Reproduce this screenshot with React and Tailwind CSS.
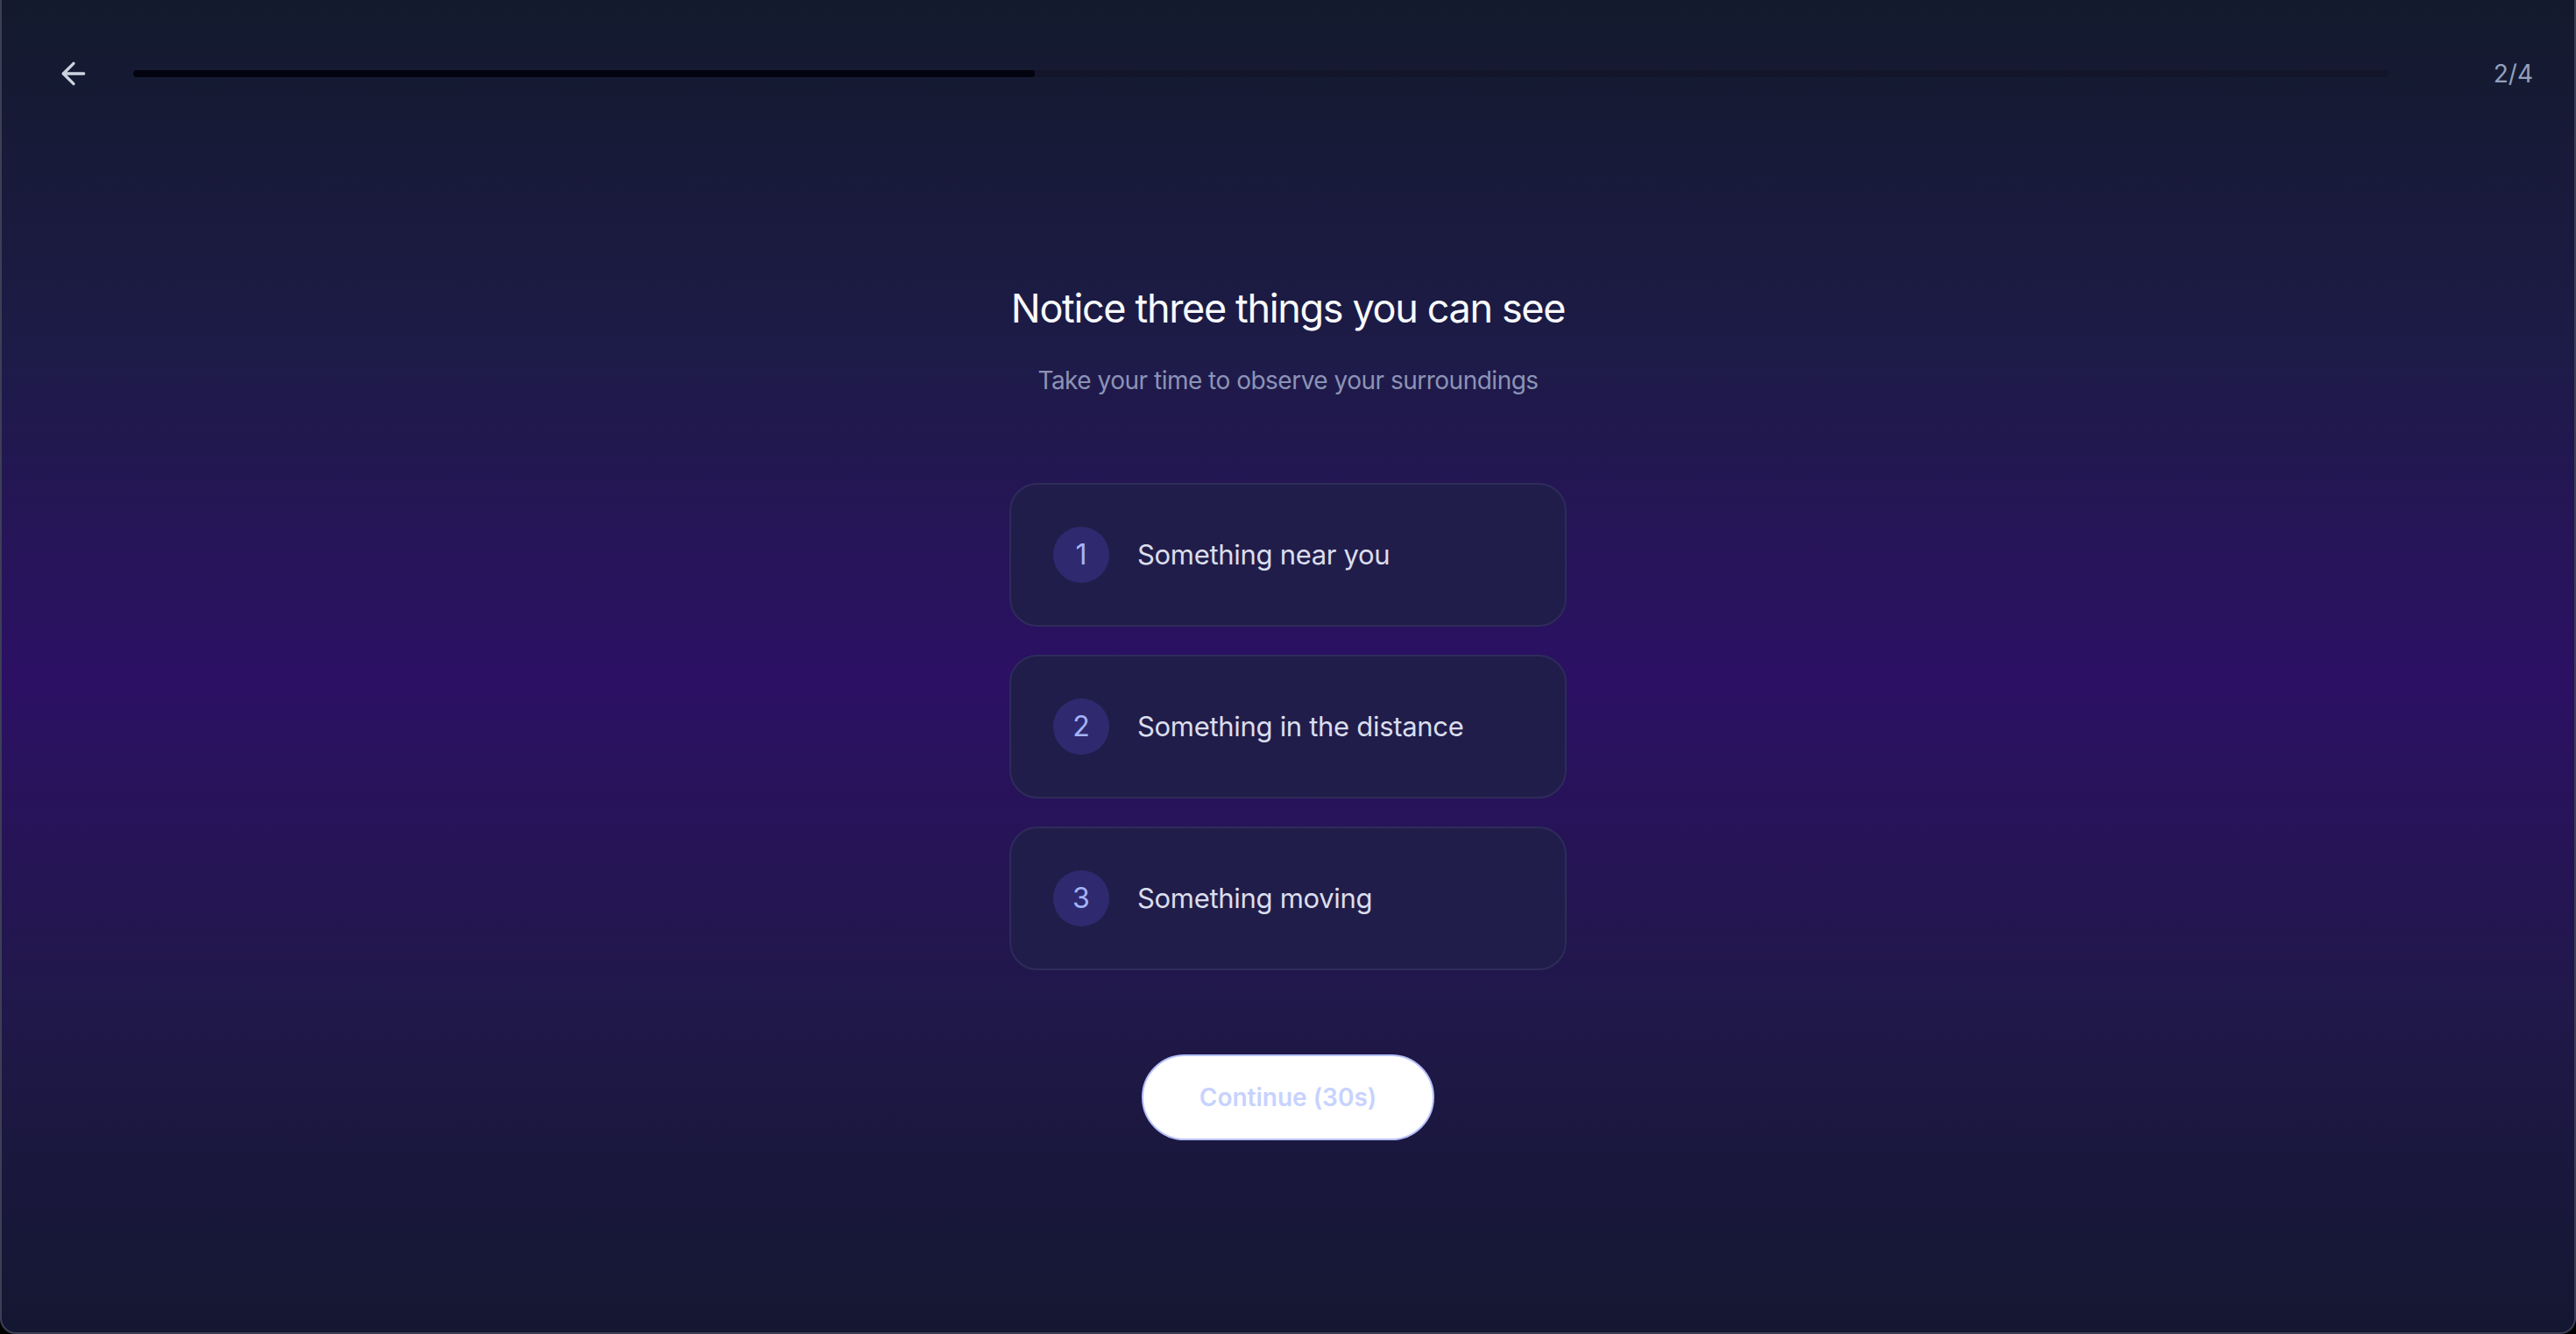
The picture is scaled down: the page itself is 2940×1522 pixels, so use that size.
import React from 'react';
import { ArrowLeft } from 'lucide-react';

const items = ['Something near you', 'Something in the distance', 'Something moving'];

function App() {
    const progress = 40;

    return (
        <div className="bg-black w-full h-[1522px]" style={{ fontFamily: 'Inter, "Noto Sans", sans-serif' }}>
            <div className="h-full rounded-b-[18px] border-x-2 border-b-2 border-[#3d3f55] bg-[linear-gradient(to_bottom,#131a2d_0%,#1d1b47_26%,#2c1064_51%,#201849_76%,#141731_100%)] flex flex-col">
                {/* top bar */}
                <div className="flex items-center h-[168px] pl-[46px] pr-[47px]">
                    <button className="p-4 text-[#cbd5e1]">
                        <ArrowLeft size={40} strokeWidth={2} />
                    </button>
                    <div className="ml-8 flex-1 h-2 rounded-full bg-[#13152a] overflow-hidden">
                        <div className="h-full rounded-full bg-[#03030f]" style={{ width: `${progress}%` }} />
                    </div>
                    <span className="ml-[120px] text-[28px] leading-[40px] text-[#94a0bd]">2/4</span>
                </div>

                {/* step content */}
                <div className="flex-1 flex flex-col items-center pt-[152px]">
                    <h1 className="text-[45px] leading-[64px] text-[#f8fafc] font-normal tracking-[-0.03em] text-center">
                        Notice three things you can see
                    </h1>
                    <p className="mt-[30px] text-[28px] leading-[40px] tracking-[-0.018em] text-[#8c93b6] text-center">
                        Take your time to observe your surroundings
                    </p>

                    <div className="mt-[97px] w-[636px] flex flex-col gap-[32px]">
                        {items.map((label, i) => (
                            <div key={label} className="flex items-center gap-[32px] p-[48px] rounded-[32px] border-2 border-[#2e2c5a] bg-[#211d4a]">
                                <div className="w-16 h-16 shrink-0 rounded-full bg-[#2f2a6f] flex items-center justify-center text-[32px] text-[#a5b4fc]">
                                    {i + 1}
                                </div>
                                <span className="text-[31px] leading-[48px] tracking-[-0.01em] text-[#dadded]">{label}</span>
                            </div>
                        ))}
                    </div>

                    <button className="mt-[96px] h-[98px] px-[64px] rounded-full bg-white border-2 border-[#b7c0fb] text-[28px] font-semibold text-[#c7d2fe]">
                        Continue (30s)
                    </button>
                </div>
            </div>
        </div>
    );
}

export default App;
